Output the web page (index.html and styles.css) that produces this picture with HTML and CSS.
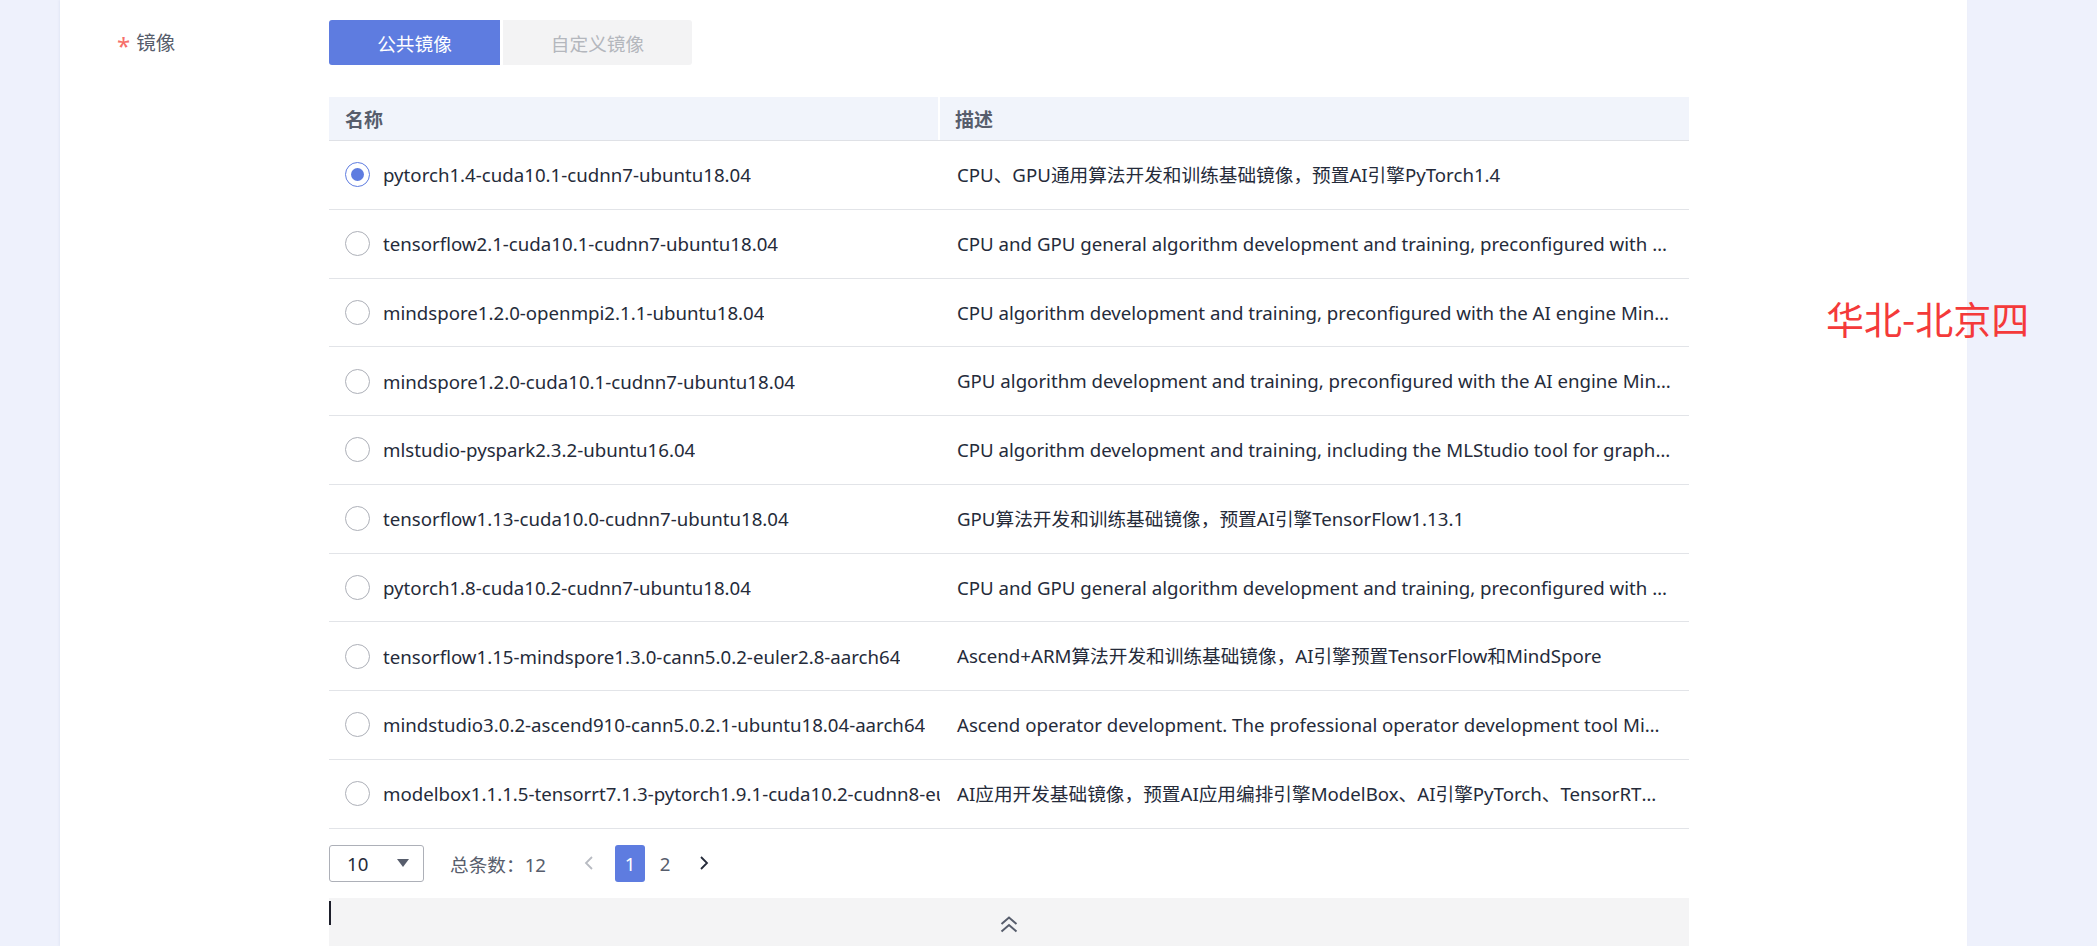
FILE: index.html
```html
<!DOCTYPE html>
<html lang="zh-CN">
<head>
<meta charset="utf-8">
<title>镜像</title>
<link rel="stylesheet" href="styles.css">
</head>
<body>
<div class="page">
  <div class="card">
    <div class="form-row">
      <div class="label"><span class="req">*</span>镜像</div>
      <div class="field">
        <div class="tabs">
          <div class="tab active">公共镜像</div>
          <div class="tab">自定义镜像</div>
        </div>
        <div class="table">
          <div class="thead">
            <div class="th th-name">名称</div>
            <div class="th">描述</div>
          </div>
          <div class="tr">
            <div class="td td-name"><span class="radio checked"></span><span class="name">pytorch1.4-cuda10.1-cudnn7-ubuntu18.04</span></div>
            <div class="td td-desc">CPU、GPU通用算法开发和训练基础镜像，预置AI引擎PyTorch1.4</div>
          </div>
          <div class="tr">
            <div class="td td-name"><span class="radio"></span><span class="name">tensorflow2.1-cuda10.1-cudnn7-ubuntu18.04</span></div>
            <div class="td td-desc">CPU and GPU general algorithm development and training, preconfigured with AI engine TensorFlow2.1</div>
          </div>
          <div class="tr">
            <div class="td td-name"><span class="radio"></span><span class="name">mindspore1.2.0-openmpi2.1.1-ubuntu18.04</span></div>
            <div class="td td-desc">CPU algorithm development and training, preconfigured with the AI engine MindSpore1.2.0</div>
          </div>
          <div class="tr">
            <div class="td td-name"><span class="radio"></span><span class="name">mindspore1.2.0-cuda10.1-cudnn7-ubuntu18.04</span></div>
            <div class="td td-desc">GPU algorithm development and training, preconfigured with the AI engine MindSpore1.2.0</div>
          </div>
          <div class="tr">
            <div class="td td-name"><span class="radio"></span><span class="name">mlstudio-pyspark2.3.2-ubuntu16.04</span></div>
            <div class="td td-desc">CPU algorithm development and training, including the MLStudio tool for graphical development</div>
          </div>
          <div class="tr">
            <div class="td td-name"><span class="radio"></span><span class="name">tensorflow1.13-cuda10.0-cudnn7-ubuntu18.04</span></div>
            <div class="td td-desc">GPU算法开发和训练基础镜像，预置AI引擎TensorFlow1.13.1</div>
          </div>
          <div class="tr">
            <div class="td td-name"><span class="radio"></span><span class="name">pytorch1.8-cuda10.2-cudnn7-ubuntu18.04</span></div>
            <div class="td td-desc">CPU and GPU general algorithm development and training, preconfigured with AI engine PyTorch1.8</div>
          </div>
          <div class="tr">
            <div class="td td-name"><span class="radio"></span><span class="name">tensorflow1.15-mindspore1.3.0-cann5.0.2-euler2.8-aarch64</span></div>
            <div class="td td-desc">Ascend+ARM算法开发和训练基础镜像，AI引擎预置TensorFlow和MindSpore</div>
          </div>
          <div class="tr">
            <div class="td td-name"><span class="radio"></span><span class="name">mindstudio3.0.2-ascend910-cann5.0.2.1-ubuntu18.04-aarch64</span></div>
            <div class="td td-desc">Ascend operator development. The professional operator development tool MindStudio is preconfigured</div>
          </div>
          <div class="tr">
            <div class="td td-name"><span class="radio"></span><span class="name">modelbox1.1.1.5-tensorrt7.1.3-pytorch1.9.1-cuda10.2-cudnn8-euler2.9.6</span></div>
            <div class="td td-desc">AI应用开发基础镜像，预置AI应用编排引擎ModelBox、AI引擎PyTorch、TensorRT和TensorFlow</div>
          </div>
        </div>
        <div class="pager">
          <div class="select"><span>10</span><svg class="caret-down" width="12" height="8" viewBox="0 0 12 8"><path d="M0 0 L12 0 L6 8 Z" fill="#575d6c"/></svg></div>
          <div class="total">总条数：12</div>
          <div class="nav">
            <svg class="arrow" width="10" height="14" viewBox="0 0 10 14"><path d="M8 1 L2 7 L8 13" fill="none" stroke="#b8bbc2" stroke-width="1.8"/></svg>
            <div class="pg current">1</div>
            <div class="pg">2</div>
            <svg class="arrow" width="10" height="14" viewBox="0 0 10 14"><path d="M2 1 L8 7 L2 13" fill="none" stroke="#252b3a" stroke-width="1.8"/></svg>
          </div>
        </div>
        <div class="collapse">
          <span class="cursor"></span>
          <svg width="18" height="17" viewBox="0 0 18 17"><path d="M1.5 8 L9 1.5 L16.5 8 M1.5 15.5 L9 9 L16.5 15.5" fill="none" stroke="#575d6c" stroke-width="2"/></svg>
        </div>
      </div>
    </div>
  </div>
  <div class="region">华北-北京四</div>
</div>
</body>
</html>
```

FILE: styles.css
```css
* { box-sizing: border-box; }
html, body {
  margin: 0;
  padding: 0;
  height: 100%;
  overflow: hidden;
}
body {
  background: #eef1fc;
  font-family: "Noto Sans", "Noto Sans CJK SC", sans-serif;
  font-size: 18.67px;
  color: #252b3a;
}
.page {
  position: relative;
  display: flex;
  height: 946px;
}
.card {
  margin-left: 60px;
  width: 1907px;
  height: 100%;
  background: #fff;
  padding-top: 20px;
  box-shadow: -1px 0 2px rgba(90, 110, 160, 0.08);
}
.form-row {
  display: flex;
}
.label {
  width: 269px;
  padding-left: 57px;
  height: 45px;
  line-height: 45px;
  color: #575d6c;
  font-size: 19.5px;
  display: flex;
  align-items: center;
}
.req {
  color: #f66f6a;
  font-size: 24px;
  margin-right: 6px;
  position: relative;
  top: 3px;
}
.field {
  width: 1360px;
}
.tabs {
  display: flex;
  gap: 3px;
  height: 45px;
}
.tab {
  display: flex;
  align-items: center;
  justify-content: center;
  width: 189px;
  background: #f3f3f4;
  color: #b4b7bd;
  font-size: 18.67px;
  border-radius: 0 3px 3px 0;
}
.tab.active {
  width: 171px;
  background: #5e7ce0;
  color: #fff;
  border-radius: 3px 0 0 3px;
}
.table {
  margin-top: 32px;
}
.thead {
  display: grid;
  grid-template-columns: 611px 749px;
  height: 44px;
  background: #f1f4fb;
  border-bottom: 1px solid #dfe1e6;
}
.th {
  display: flex;
  align-items: center;
  padding-left: 16px;
  color: #575d6c;
  font-weight: 600;
  font-size: 19px;
}
.th-name {
  border-right: 2px solid #fff;
}
.th + .th {
  padding-left: 15px;
}
.tr {
  display: grid;
  grid-template-columns: 611px 749px;
  height: 68.75px;
  border-bottom: 1px solid #e2e4e8;
}
.td {
  display: flex;
  align-items: center;
  overflow: hidden;
  white-space: nowrap;
}
.td-name {
  padding-left: 16px;
}
.radio {
  flex: none;
  width: 25px;
  height: 25px;
  border: 1.4px solid #adb0b8;
  border-radius: 50%;
  margin-right: 13px;
  display: flex;
  align-items: center;
  justify-content: center;
}
.radio.checked {
  border-color: #5e7ce0;
}
.radio.checked::after {
  content: "";
  width: 13px;
  height: 13px;
  border-radius: 50%;
  background: #5e7ce0;
}
.name {
  overflow: hidden;
  white-space: nowrap;
}
.td-desc {
  display: block;
  padding: 0 18px 0 17px;
  line-height: 67.75px;
  text-overflow: ellipsis;
}
.pager {
  margin-top: 16px;
  height: 37px;
  display: flex;
  align-items: center;
}
.select {
  width: 95px;
  height: 37px;
  border: 1px solid #adb0b8;
  border-radius: 3px;
  display: flex;
  align-items: center;
  justify-content: space-between;
  padding: 0 14px 0 17px;
}
.select span {
  color: #252b3a;
}
.total {
  margin-left: 26px;
  color: #575d6c;
}
.nav {
  margin-left: 38px;
  display: flex;
  align-items: center;
}
.pg {
  width: 30px;
  height: 37px;
  display: flex;
  align-items: center;
  justify-content: center;
  color: #575d6c;
  border-radius: 3px;
  margin-left: 5px;
}
.pg.current {
  background: #5e7ce0;
  color: #fff;
  margin-left: 21px;
}
.pg + .arrow {
  margin-left: 19px;
}
.collapse {
  position: relative;
  margin-top: 16px;
  height: 60px;
  background: #f4f4f5;
  display: flex;
  justify-content: center;
  padding-top: 18px;
}
.cursor {
  position: absolute;
  left: 0;
  top: 3px;
  width: 2px;
  height: 24px;
  background: #1d1f2b;
}
.region {
  position: absolute;
  left: 1826px;
  top: 295px;
  font-family: "Noto Sans CJK SC", sans-serif;
  font-size: 38px;
  line-height: 46px;
  color: #f43a3a;
}
```
